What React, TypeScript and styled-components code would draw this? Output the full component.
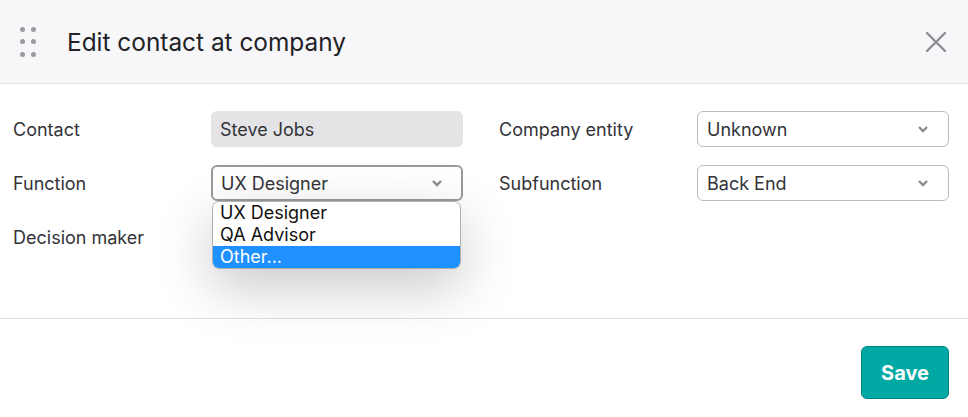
import React from 'react'
import styled, { createGlobalStyle } from 'styled-components'

const GlobalStyle = createGlobalStyle`
  * { box-sizing: border-box; }
  body {
    margin: 0;
    background: #ffffff;
    font-family: Inter, "Noto Sans", "Liberation Sans", sans-serif;
  }
`

const Dialog = styled.div`
  width: 968px;
  height: 417px;
  display: flex;
  flex-direction: column;
  background: #fff;
  overflow: hidden;
`

const Header = styled.div`
  height: 84px;
  flex-shrink: 0;
  display: flex;
  align-items: center;
  padding: 0 20px 0 20px;
  background: #f7f7f9;
  border-bottom: 1px solid #e4e4e6;
`

const Grip = styled.div`
  display: grid;
  grid-template-columns: repeat(2, 5px);
  grid-auto-rows: 5px;
  column-gap: 6px;
  row-gap: 7.5px;
  margin-right: 31px;
  span {
    display: block;
    width: 5px;
    height: 5px;
    border-radius: 50%;
    background: #9a9aa0;
  }
`

const Title = styled.h1`
  flex: 1;
  margin: 0;
  font-size: 24.4px;
  font-weight: 400;
  color: #222226;
`

const CloseButton = styled.button`
  border: none;
  background: none;
  padding: 0;
  width: 24px;
  height: 24px;
  display: flex;
  align-items: center;
  justify-content: center;
  cursor: pointer;
`

const Body = styled.div`
  flex: 1;
  padding: 27px 19px 0 13px;
  display: grid;
  grid-template-columns: 198px 252px 234px 252px;
  grid-auto-rows: 36px;
  row-gap: 18px;
  align-content: start;
  border-bottom: 1px solid #e2e2e2;
`

const Label = styled.div<{ $second?: boolean }>`
  display: flex;
  align-items: center;
  font-size: 18px;
  color: #333338;
  height: 36px;
  padding-left: ${p => (p.$second ? '36px' : '0')};
`

const ReadOnlyField = styled.div`
  height: 36px;
  border-radius: 6px;
  background: #e4e4e7;
  display: flex;
  align-items: center;
  padding: 0 9px;
  font-size: 18px;
  color: #333338;
`

const SelectWrap = styled.div`
  position: relative;
`

const SelectBox = styled.div<{ $focused?: boolean }>`
  height: 36px;
  border-radius: 6px;
  background: #fff;
  border: ${p => (p.$focused ? '2px solid #9a9a9a' : '1px solid #bcbcbc')};
  display: flex;
  align-items: center;
  justify-content: space-between;
  padding: ${p => (p.$focused ? '0 18px 0 8px' : '0 19px 0 9px')};
  font-size: 18px;
  color: #333338;
`

const Menu = styled.ul`
  position: absolute;
  top: 36px;
  left: 1px;
  right: 2px;
  margin: 0;
  padding: 0;
  list-style: none;
  background: #fff;
  border: 1px solid #b0b0b0;
  border-radius: 7px;
  overflow: hidden;
  box-shadow: 0 18px 55px rgba(0, 0, 0, 0.22);
  z-index: 5;
`

const Option = styled.li<{ $active?: boolean }>`
  height: 22px;
  line-height: 22px;
  padding: 0 7px;
  font-size: 18px;
  color: ${p => (p.$active ? '#fff' : '#111')};
  background: ${p => (p.$active ? '#1e90ff' : 'transparent')};
`

const Footer = styled.div`
  height: 98px;
  flex-shrink: 0;
  display: flex;
  justify-content: flex-end;
  align-items: flex-start;
  padding: 27px 19px 0 0;
`

const SaveButton = styled.button`
  width: 88px;
  height: 53px;
  border-radius: 6px;
  border: 1px solid #00847f;
  background: #00a9a4;
  color: #fff;
  font-family: inherit;
  font-size: 20px;
  font-weight: 700;
  cursor: pointer;
`

const Chevron = () => (
  <svg width="12" height="8" viewBox="0 0 12 8">
    <path d="M2 2 L6 6 L10 2" fill="none" stroke="#8a8a90" strokeWidth="2.4" />
  </svg>
)

const CloseIcon = () => (
  <svg width="22" height="22" viewBox="0 0 22 22">
    <path d="M2 2 L20 20 M20 2 L2 20" stroke="#8c8c92" strokeWidth="2.4" strokeLinecap="round" />
  </svg>
)

const Select = ({ value, focused, options }: { value: string; focused?: boolean; options?: string[] }) => (
  <SelectWrap>
    <SelectBox $focused={focused}>
      <span>{value}</span>
      <Chevron />
    </SelectBox>
    {options && (
      <Menu>
        {options.map((o, i) => (
          <Option key={o} $active={i === options.length - 1}>{o}</Option>
        ))}
      </Menu>
    )}
  </SelectWrap>
)

export default function App() {
  return (
    <>
      <GlobalStyle />
      <Dialog>
        <Header>
          <Grip>
            {Array.from({ length: 6 }).map((_, i) => <span key={i} />)}
          </Grip>
          <Title>Edit contact at company</Title>
          <CloseButton aria-label="Close">
            <CloseIcon />
          </CloseButton>
        </Header>
        <Body>
          <Label>Contact</Label>
          <ReadOnlyField>Steve Jobs</ReadOnlyField>
          <Label $second>Company entity</Label>
          <Select value="Unknown" />

          <Label>Function</Label>
          <Select value="UX Designer" focused options={['UX Designer', 'QA Advisor', 'Other...']} />
          <Label $second>Subfunction</Label>
          <Select value="Back End" />

          <Label>Decision maker</Label>
        </Body>
        <Footer>
          <SaveButton>Save</SaveButton>
        </Footer>
      </Dialog>
    </>
  )
}
